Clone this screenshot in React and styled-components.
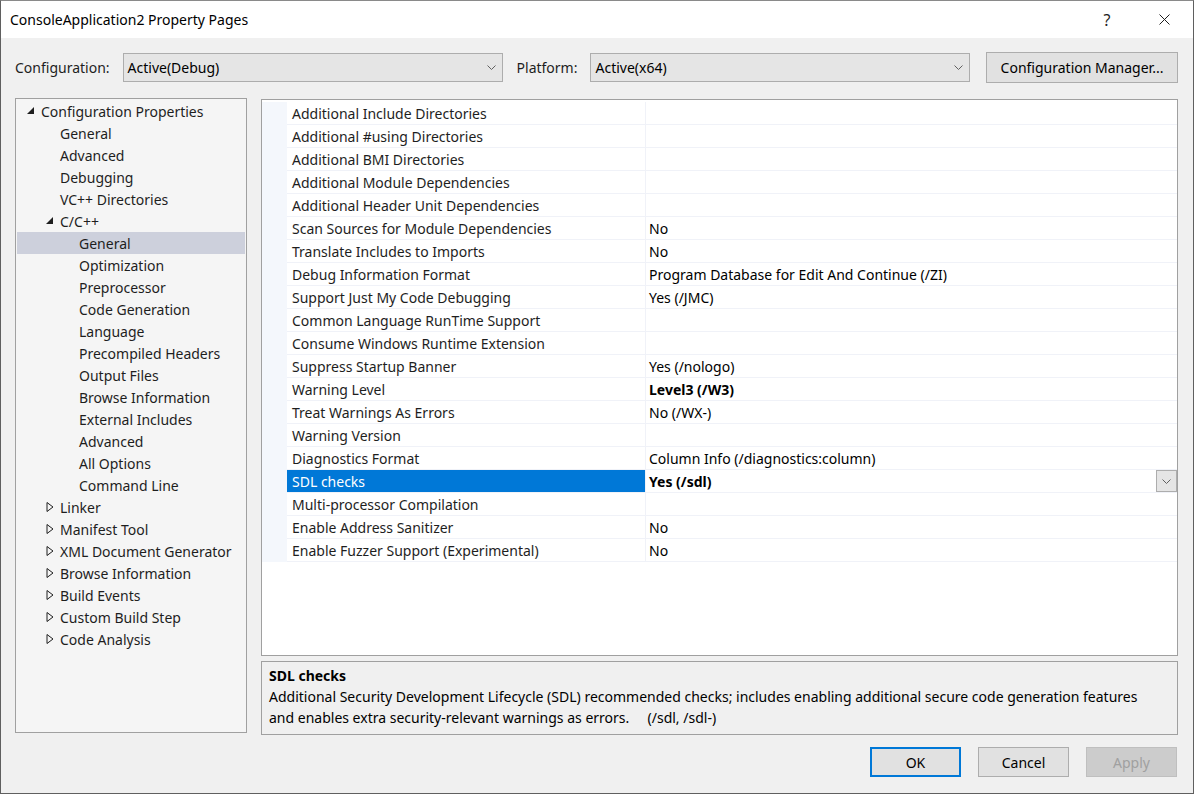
import React from "react";
import styled, { createGlobalStyle } from "styled-components";

const GlobalStyle = createGlobalStyle`
  html, body {
    margin: 0;
    padding: 0;
    background: #f0f0f0;
  }
  body {
    font-family: "Noto Sans", "Open Sans", sans-serif;
    font-size: 14px;
    color: #1e1e1e;
  }
`;

const treeItems = [
  { label: "Configuration Properties", level: 0, state: "open" },
  { label: "General", level: 1 },
  { label: "Advanced", level: 1 },
  { label: "Debugging", level: 1 },
  { label: "VC++ Directories", level: 1 },
  { label: "C/C++", level: 1, state: "open" },
  { label: "General", level: 2, selected: true },
  { label: "Optimization", level: 2 },
  { label: "Preprocessor", level: 2 },
  { label: "Code Generation", level: 2 },
  { label: "Language", level: 2 },
  { label: "Precompiled Headers", level: 2 },
  { label: "Output Files", level: 2 },
  { label: "Browse Information", level: 2 },
  { label: "External Includes", level: 2 },
  { label: "Advanced", level: 2 },
  { label: "All Options", level: 2 },
  { label: "Command Line", level: 2 },
  { label: "Linker", level: 1, state: "closed" },
  { label: "Manifest Tool", level: 1, state: "closed" },
  { label: "XML Document Generator", level: 1, state: "closed" },
  { label: "Browse Information", level: 1, state: "closed" },
  { label: "Build Events", level: 1, state: "closed" },
  { label: "Custom Build Step", level: 1, state: "closed" },
  { label: "Code Analysis", level: 1, state: "closed" },
];

const properties = [
  { name: "Additional Include Directories", value: "" },
  { name: "Additional #using Directories", value: "" },
  { name: "Additional BMI Directories", value: "" },
  { name: "Additional Module Dependencies", value: "" },
  { name: "Additional Header Unit Dependencies", value: "" },
  { name: "Scan Sources for Module Dependencies", value: "No" },
  { name: "Translate Includes to Imports", value: "No" },
  { name: "Debug Information Format", value: "Program Database for Edit And Continue (/ZI)" },
  { name: "Support Just My Code Debugging", value: "Yes (/JMC)" },
  { name: "Common Language RunTime Support", value: "" },
  { name: "Consume Windows Runtime Extension", value: "" },
  { name: "Suppress Startup Banner", value: "Yes (/nologo)" },
  { name: "Warning Level", value: "Level3 (/W3)", bold: true },
  { name: "Treat Warnings As Errors", value: "No (/WX-)" },
  { name: "Warning Version", value: "" },
  { name: "Diagnostics Format", value: "Column Info (/diagnostics:column)" },
  { name: "SDL checks", value: "Yes (/sdl)", bold: true, selected: true },
  { name: "Multi-processor Compilation", value: "" },
  { name: "Enable Address Sanitizer", value: "No" },
  { name: "Enable Fuzzer Support (Experimental)", value: "No" },
];

const Chevron = () => (
  <svg width="9" height="5" viewBox="0 0 9 5">
    <polyline points="0.5,0.5 4.5,4.5 8.5,0.5" fill="none" stroke="#606060" strokeWidth="1" />
  </svg>
);

const Expander = ({ state }) => {
  if (state === "open") {
    return (
      <svg width="8" height="8" viewBox="0 0 8 8">
        <polygon points="0,7 7,7 7,0" fill="#1e1e1e" />
      </svg>
    );
  }
  if (state === "closed") {
    return (
      <svg width="8" height="10" viewBox="0 0 8 10">
        <polygon points="1,0.5 7,5 1,9.5" fill="none" stroke="#1e1e1e" strokeWidth="1" />
      </svg>
    );
  }
  return null;
};

const App = () => (
  <>
    <GlobalStyle />
    <Window>
      <TitleBar>
        <Title>ConsoleApplication2 Property Pages</Title>
        <Caption>
          <CaptionButton>?</CaptionButton>
          <CaptionButton>
            <svg width="11" height="11" viewBox="0 0 11 11">
              <path d="M0.5 0.5 L10.5 10.5 M10.5 0.5 L0.5 10.5" stroke="#1e1e1e" strokeWidth="1" />
            </svg>
          </CaptionButton>
        </Caption>
      </TitleBar>

      <Body>
        <TopRow>
          <FieldLabel>Configuration:</FieldLabel>
          <Combo>
            <span>Active(Debug)</span>
            <Chevron />
          </Combo>
          <FieldLabel $spaced>Platform:</FieldLabel>
          <Combo>
            <span>Active(x64)</span>
            <Chevron />
          </Combo>
          <Button $wide>Configuration Manager...</Button>
        </TopRow>

        <Main>
          <Tree>
            {treeItems.map((item, i) => (
              <TreeRow key={i} $level={item.level} $selected={item.selected}>
                <ExpanderBox>
                  <Expander state={item.state} />
                </ExpanderBox>
                {item.label}
              </TreeRow>
            ))}
          </Tree>

          <RightColumn>
            <Grid>
              {properties.map((p, i) => (
                <PropRow key={i}>
                  <Stripe />
                  <NameCell $selected={p.selected}>{p.name}</NameCell>
                  <ValueCell $bold={p.bold}>
                    <span>{p.value}</span>
                    {p.selected && (
                      <DropButton>
                        <Chevron />
                      </DropButton>
                    )}
                  </ValueCell>
                </PropRow>
              ))}
            </Grid>
            <Description>
              <DescTitle>SDL checks</DescTitle>
              <DescText>
                Additional Security Development Lifecycle (SDL) recommended checks; includes enabling additional secure code generation features
                <br />
                and enables extra security-relevant warnings as errors.{"\u00a0\u00a0\u00a0\u00a0 "}(/sdl, /sdl-)
              </DescText>
            </Description>
          </RightColumn>
        </Main>

        <Footer>
          <Button $default>OK</Button>
          <Button>Cancel</Button>
          <Button $disabled>Apply</Button>
        </Footer>
      </Body>
    </Window>
  </>
);

const Window = styled.div`
  width: 1194px;
  height: 794px;
  box-sizing: border-box;
  border: 1px solid #5f5f5f;
  border-top-color: #8a8a8a;
  display: flex;
  flex-direction: column;
  background: #f0f0f0;
  overflow: hidden;
`;

const TitleBar = styled.div`
  height: 37px;
  flex-shrink: 0;
  background: #ffffff;
  display: flex;
  align-items: center;
  padding-left: 9px;
`;

const Title = styled.div`
  flex: 1;
  color: #000;
  font-size: 14px;
`;

const Caption = styled.div`
  display: flex;
  height: 100%;
  padding-right: 6px;
  gap: 11px;
`;

const CaptionButton = styled.div`
  width: 46px;
  height: 100%;
  display: flex;
  align-items: center;
  justify-content: center;
  font-size: 16px;
  color: #1e1e1e;
`;

const Body = styled.div`
  flex: 1;
  display: flex;
  flex-direction: column;
  padding: 14px 15px 0 14px;
`;

const TopRow = styled.div`
  height: 31px;
  display: flex;
  align-items: center;
`;

const FieldLabel = styled.div`
  margin-right: 13px;
  margin-left: ${(p) => (p.$spaced ? "14px" : "0")};
  color: #1e1e1e;
`;

const Combo = styled.div`
  width: 380px;
  height: 29px;
  box-sizing: border-box;
  border: 1px solid #adadad;
  background: #e5e5e5;
  display: flex;
  align-items: center;
  justify-content: space-between;
  padding: 0 6px 0 4px;
  color: #000;
`;

const Button = styled.div`
  width: ${(p) => (p.$wide ? "192px" : "91px")};
  height: ${(p) => (p.$wide ? "31px" : "30px")};
  margin-left: ${(p) => (p.$wide ? "auto" : "0")};
  box-sizing: border-box;
  display: flex;
  align-items: center;
  justify-content: center;
  background: ${(p) => (p.$disabled ? "#cccccc" : "#e1e1e1")};
  border: ${(p) =>
    p.$default ? "2px solid #0078d7" : p.$disabled ? "1px solid #bfbfbf" : "1px solid #adadad"};
  color: ${(p) => (p.$disabled ? "#a0a0a0" : "#000")};
`;

const Main = styled.div`
  margin-top: 15px;
  height: 634px;
  display: grid;
  grid-template-columns: 232px 1fr;
  gap: 14px;
`;

const Tree = styled.div`
  box-sizing: border-box;
  border: 1px solid #a0a0a0;
  background: #f5f5f5;
  padding: 1px;
  height: 635px;
`;

const TreeRow = styled.div`
  height: 22px;
  display: flex;
  align-items: center;
  padding-left: ${(p) => 8 + p.$level * 19}px;
  background: ${(p) => (p.$selected ? "#cdd0dc" : "transparent")};
  color: #1e1e1e;
  white-space: nowrap;
`;

const ExpanderBox = styled.span`
  width: 16px;
  display: flex;
  align-items: center;
  justify-content: flex-start;
  padding-left: 2px;
  box-sizing: border-box;
`;

const RightColumn = styled.div`
  display: flex;
  flex-direction: column;
  gap: 5px;
  margin-top: 1px;
  height: 636px;
`;

const Grid = styled.div`
  flex: 1;
  box-sizing: border-box;
  border: 1px solid #a0a0a0;
  background: #ffffff;
  padding-top: 2px;
`;

const PropRow = styled.div`
  height: 23px;
  display: grid;
  grid-template-columns: 25px 359px 1fr;
`;

const Stripe = styled.div`
  background: #f4f7fc;
`;

const NameCell = styled.div`
  box-sizing: border-box;
  border-bottom: 1px solid #f0f2f8;
  border-right: 1px solid #f0f2f8;
  padding-left: 5px;
  display: flex;
  align-items: center;
  background: ${(p) => (p.$selected ? "#0078d7" : "transparent")};
  color: ${(p) => (p.$selected ? "#ffffff" : "#1e1e1e")};
  white-space: nowrap;
`;

const ValueCell = styled.div`
  box-sizing: border-box;
  border-bottom: 1px solid #f0f2f8;
  padding-left: 3px;
  display: flex;
  align-items: center;
  justify-content: space-between;
  font-weight: ${(p) => (p.$bold ? 700 : 400)};
  color: #000;
  white-space: nowrap;
`;

const DropButton = styled.div`
  width: 21px;
  height: 22px;
  box-sizing: border-box;
  border: 1px solid #adadad;
  background: #e5e5e5;
  display: flex;
  align-items: center;
  justify-content: center;
`;

const Description = styled.div`
  height: 74px;
  box-sizing: border-box;
  border: 1px solid #a0a0a0;
  background: #f0f0f0;
  padding: 3px 7px;
  line-height: 21px;
  color: #000;
`;

const DescTitle = styled.div`
  font-weight: 700;
`;

const DescText = styled.div`
  white-space: nowrap;
`;

const Footer = styled.div`
  margin-top: 15px;
  display: flex;
  justify-content: flex-end;
  gap: 17px;
  padding-right: 1px;
`;

export default App;
